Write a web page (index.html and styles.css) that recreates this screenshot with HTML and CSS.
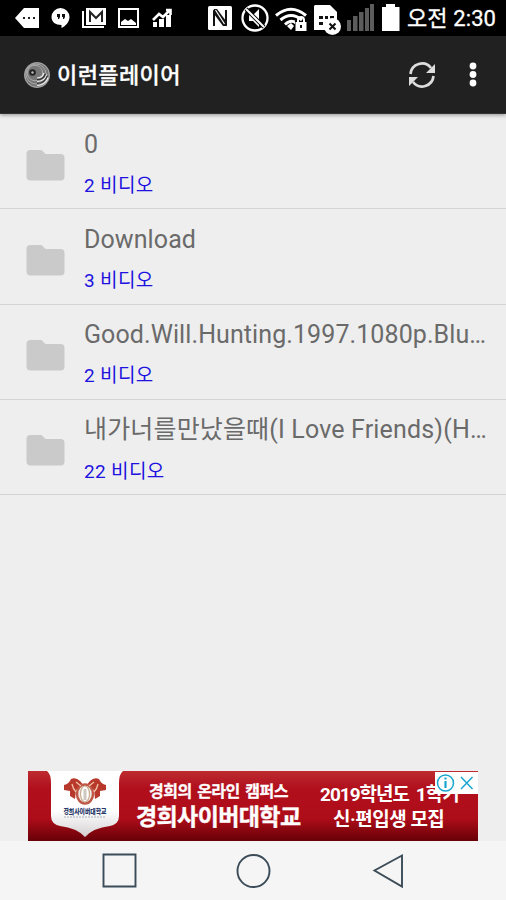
FILE: index.html
```html
<!DOCTYPE html>
<html lang="ko">
<head>
<meta charset="utf-8">
<title>이런플레이어</title>
<link rel="stylesheet" href="styles.css">
</head>
<body>
<div class="screen">
  <div class="status">
    <svg class="status-icons" width="400" height="36" viewBox="0 0 400 36" fill="#fff">
      <path d="M15 18 24 8H39V28H24Z"/><path fill="#222" d="M23 17h2v2h-2zM28 17h2v2h-2zM33 17h2v2h-2z"/>
      <path d="M60.500 8a9 9 0 0 1 9 9c0 5-4 9-8 11v-3c-6 0-10-3-10-8a9 9 0 0 1 9-9Z"/><path fill="#111" d="M57 14h3v3l-1 2h-1v-2h-1zM62 14h3v3l-1 2h-1v-2h-1z"/>
      <path d="M82 11h2v15h20v2H82Z"/><path d="M86 8h20v17H86Z"/><path d="M90 22V12l6 6 6-6v10" fill="none" stroke="#222" stroke-width="2"/>
      <path d="M119 9h19v18h-19Z" fill="none" stroke="#fff" stroke-width="2"/><path d="m121 25 0-3 4-3 3 2 3-2 5 4v2Z"/>
      <path d="M153 22h4v5h-4zM159 19h5v8h-5zM166 15h5v12h-5z"/><path d="m153 20 6-6 4 3 7-7M166 10h4.500v5" fill="none" stroke="#fff" stroke-width="2.600"/>
      <rect x="208" y="6" width="24" height="24" rx="1.500"/><path d="M214 26V12l12 12V10" fill="none" stroke="#111" stroke-width="2"/><path d="m214 9 3 0 9 12v5h-3l-9-12Z" fill="#111"/><path d="m215.500 10 9 14" stroke="#fff" stroke-width="1.200"/>
      <circle cx="255" cy="18" r="12.500" fill="none" stroke="#fff" stroke-width="2.300"/><path d="M249 15h4l6-6v18l-6-6h-4Z"/><path d="m246 9 18 18" stroke="#000" stroke-width="4"/><path d="m246 9 18 18" stroke="#fff" stroke-width="2"/>
      <g fill="none" stroke="#fff" stroke-width="3"><path d="M276 15.500Q291 3 306 15.500M280.500 20Q291 11 302 20M285 24.500Q291 19 296 23"/></g><path d="m287 26 4-3 3 3-3 4Z"/>
      <path d="M295 21h12v10h-12Z" fill="#000"/><path d="M295.500 22h11v9h-11Z"/><path d="M298 22v-2a3 3 0 0 1 6 0v2" fill="none" stroke="#fff" stroke-width="2"/><path d="M300 25h2v3h-2z" fill="#111"/>
      <path d="M315 5h15l7 7v18h-23V6Z"/><path fill="#111" d="M319 16h4v3h-4zM325 16h3v3h-3zM330 16h4v3h-4zM319 22h4v3h-4zM325 22h4v3h-4z"/><circle cx="332.500" cy="26.500" r="8.500"/><path d="m329.500 23.500 6 6m0-6-6 6" stroke="#111" stroke-width="2"/>
      <path fill="#5c5c5c" d="M347 20h4v11h-4zM353 16h4.500v15H353zM359 12h4.500v19H359zM365 8h4v23h-4zM370 4h4v27h-4z"/>
      <path d="M382 7h4V4h9v3h4.500v24H382Z"/>
    </svg>
    <span class="time">오전 2:30</span>
  </div>
  <header class="appbar">
    <svg class="logo" width="28" height="28" viewBox="0 0 28 28" fill="none">
      <circle cx="14" cy="14" r="13" fill="#777"/>
      <g stroke="#aaa" stroke-width="1"><circle cx="14" cy="14" r="12.300"/><circle cx="13" cy="13" r="10"/><circle cx="12" cy="12" r="7.700"/></g>
      <circle cx="9.500" cy="11.500" r="3.300" fill="#222"/><circle cx="9.500" cy="11.500" r="1.200" fill="#bbb"/>
      <path d="M14 17c4 0 6-2 7-5M14 20.500c5 0 9-3 10-7M14 24.500c6 0 10-4 11-8" stroke="#eee" stroke-width="1.200"/><path d="M14 18.700c5 0 7-2 8.500-6M14 22.500c6 0 9-4 10.500-8" stroke="#333" stroke-width="1.200"/>
    </svg>
    <h1>이런플레이어</h1>
    <svg class="refresh" width="28" height="28" viewBox="0 0 28 28" fill="none" stroke="#ddd" stroke-width="2.700">
      <path d="M2.500 13A11.500 11.500 0 0 1 23 7M25.500 15A11.500 11.500 0 0 1 5 21"/><path d="M27 3v9h-9ZM1 25v-9h9Z" fill="#ddd" stroke="none"/>
    </svg>
    <svg class="more" width="8" height="26" viewBox="0 0 8 26" fill="#fff"><circle cx="4" cy="4" r="3.400"/><circle cx="4" cy="12.500" r="3.400"/><circle cx="4" cy="21" r="3.400"/></svg>
  </header>
  <ul class="list">
    <li><svg class="folder" viewBox="0 0 38 31"><path d="M4 0h11l4 4h15a4 4 0 0 1 4 4v18.500a4 4 0 0 1-4 4H4a4 4 0 0 1-4-4V4a4 4 0 0 1 4-4Z"/></svg><div class="info"><div class="name">0</div><div class="count">2 비디오</div></div></li>
    <li><svg class="folder" viewBox="0 0 38 31"><path d="M4 0h11l4 4h15a4 4 0 0 1 4 4v18.500a4 4 0 0 1-4 4H4a4 4 0 0 1-4-4V4a4 4 0 0 1 4-4Z"/></svg><div class="info"><div class="name">Download</div><div class="count">3 비디오</div></div></li>
    <li><svg class="folder" viewBox="0 0 38 31"><path d="M4 0h11l4 4h15a4 4 0 0 1 4 4v18.500a4 4 0 0 1-4 4H4a4 4 0 0 1-4-4V4a4 4 0 0 1 4-4Z"/></svg><div class="info"><div class="name">Good.Will.Hunting.1997.1080p.Blu…</div><div class="count">2 비디오</div></div></li>
    <li><svg class="folder" viewBox="0 0 38 31"><path d="M4 0h11l4 4h15a4 4 0 0 1 4 4v18.500a4 4 0 0 1-4 4H4a4 4 0 0 1-4-4V4a4 4 0 0 1 4-4Z"/></svg><div class="info"><div class="name name-mixed">내가너를만났을때(I Love Friends)(H…</div><div class="count">22 비디오</div></div></li>
  </ul>
  <div class="ad">
    <svg class="crest" width="76" height="68" viewBox="0 0 76 68">
      <defs><linearGradient id="shield" x2="0" y2="1"><stop offset=".6" stop-color="#fff"/><stop offset="1" stop-color="#d4d0d1"/></linearGradient></defs>
      <path d="M0 0h76q-4 3-4 12v33q0 8-9 10-17 2-25 11-8-9-25-11-9-2-9-10V12Q4 3 0 0Z" fill="url(#shield)"/>
      <path d="M17 14q5-1 7-6 5-2 9 2l4 5-8 4-1 9-5-3v-5l-6-1ZM59 14q-5-1-7-6-5-2-9 2l-4 5 8 4 1 9 5-3v-5l6-1Z" fill="#b8392b"/>
      <ellipse cx="38" cy="23" rx="8" ry="9.500" fill="#f1ebe5" stroke="#bf5846" stroke-width="2.500"/>
      <ellipse cx="38" cy="23" rx="4.500" ry="8" fill="#fff" stroke="#c9ad92" stroke-width="1.200"/>
      <path d="M25 13q1 5 4 8M51 13q-1 5-4 8M29 11l5 4M47 11l-5 4" fill="none" stroke="#efc2a5" stroke-width="1.300"/><path d="M36.500 18h3v11h-3z" fill="#cfc8c0"/>
      <text x="16.500" y="43" textLength="43" lengthAdjust="spacingAndGlyphs">경희사이버대학교</text><path d="M17 46h42" stroke="#a8adbd" stroke-width="1" stroke-dasharray="2 1"/>
    </svg>
    <div class="brand"><div class="brand-top">경희의 온라인 캠퍼스</div><div class="brand-name">경희사이버대학교</div></div>
    <div class="promo"><div class="promo-first">2019학년도 1학기</div><div class="promo-second">신·편입생 모집</div></div>
    <svg class="ad-badge" width="43" height="22" viewBox="0 0 43 22" fill="none" stroke="#18a5cf" stroke-width="1.500"><path d="M0 0h43v22H0Z" fill="#fff" stroke="none"/><circle cx="10.500" cy="11" r="8"/><path d="M10.500 9v7M10.500 5.500v2" stroke-width="2.200"/><path d="m26 5 11.500 12m0-12L26 17"/></svg>
  </div>
  <nav class="nav">
    <svg width="506" height="59" viewBox="0 0 506 59" fill="none" stroke="#3b4c58" stroke-width="1.900"><path d="M103.500 13.500h32v32h-32zM402 14.500v31l-27.500-16Z"/><circle cx="253.500" cy="30" r="16"/></svg>
  </nav>
</div>
</body>
</html>
```

FILE: styles.css
```css
* { box-sizing: border-box; }
body { margin: 0; font-family: Roboto, "Noto Sans CJK KR", sans-serif; }
.screen { width: 506px; height: 900px; display: flex; flex-direction: column; background: #eee; overflow: hidden; }
svg { display: block; flex: none; }
.status { height: 36px; flex: none; display: flex; background: #000; color: #fff; }
.time { margin-left: 7px; font-size: 22px; line-height: 37px; letter-spacing: .1px; white-space: nowrap; -webkit-text-stroke: .3px #fff; }
.appbar { height: 78px; flex: none; display: flex; align-items: center; padding: 0 29px 0 23px; background: #212121; border-bottom: 1px solid #333; box-shadow: 0 1px 4px rgba(0,0,0,.4); z-index: 1; }
.appbar h1 { margin: 3px auto 0 6px; color: #fff; font-size: 22px; line-height: 30px; font-weight: 500; letter-spacing: .4px; -webkit-text-stroke: .3px #fff; }
.refresh { margin-right: 33px; }
.list { margin: 0; padding: 0; list-style: none; flex: none; }
.list li { height: 95.300px; display: flex; padding-left: 26px; border-bottom: 1.500px solid #d4d4d4; }
.folder { width: 39px; height: 31px; margin-top: 35.500px; fill: #cacaca; }
.info { margin-left: 19px; padding-top: 13.600px; white-space: nowrap; }
.name { height: 34px; color: #6a6a6a; font-size: 25px; line-height: 34px; letter-spacing: .09px; }
.name-mixed { letter-spacing: .16px; }
.count { height: 28px; margin-top: 10.200px; color: #1d12df; font-size: 19px; line-height: 28px; letter-spacing: .35px; }
.ad { position: relative; display: flex; width: 450px; height: 70px; margin: auto 28px 0; background: linear-gradient(#bd2b30, #b10f1c 25%, #ad0d18 68%, #680008); color: #fff; overflow: hidden; flex: none; }
.crest { margin-left: 19px; }
.crest text { font: 900 7px "Noto Sans CJK KR", sans-serif; fill: #253668; }
.brand { width: 167px; margin-left: 13px; font-weight: 700; white-space: nowrap; }
.brand-top { margin-top: 9px; padding-left: 13px; font-size: 16px; line-height: 23px; letter-spacing: -.500px; word-spacing: 2px; -webkit-text-stroke: .3px #fff; }
.brand-name { font-size: 23px; line-height: 30px; letter-spacing: -.600px; -webkit-text-stroke: .4px #fff; }
.promo { margin-left: 17px; padding-top: 11px; font-size: 19px; line-height: 25px; font-weight: 700; white-space: nowrap; letter-spacing: -.500px; }
.promo-first { letter-spacing: -1px; word-spacing: 3px; }
.promo-second { padding-left: 13px; }
.ad-badge { position: absolute; top: 1px; right: 0; }
.nav { height: 59px; flex: none; background: #f5f5f5; }
```
